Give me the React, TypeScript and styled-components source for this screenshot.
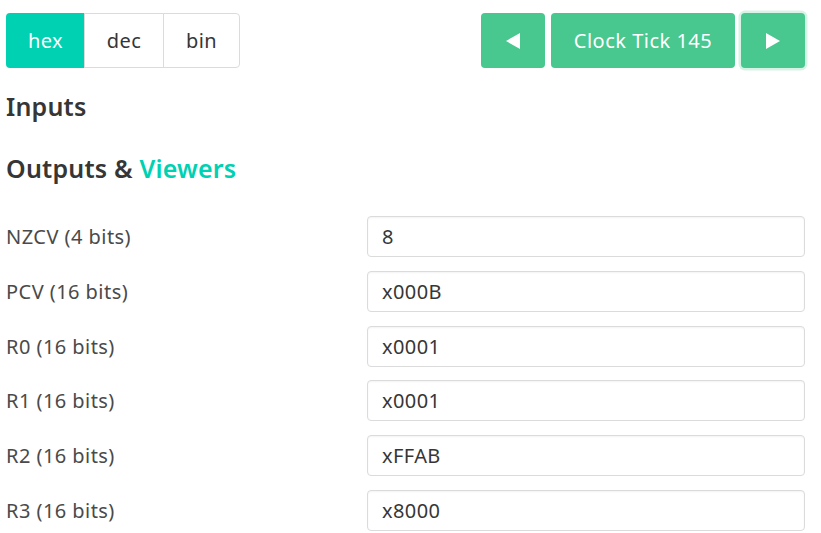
import React from "react";
import styled, { createGlobalStyle } from "styled-components";

const Global = createGlobalStyle`
  html, body { margin: 0; padding: 0; background: #fff; }
  body { font-family: "Noto Sans", "Open Sans", sans-serif; color: #4a4a4a; }
  * { box-sizing: border-box; }
`;

const Page = styled.div`
  padding: 13px 16px 0 6px;
  display: flex;
  flex-direction: column;
`;

const Toolbar = styled.div`
  display: flex;
  justify-content: space-between;
  align-items: center;
`;

const Segmented = styled.div`
  display: flex;
`;

const SegButton = styled.button<{ $active?: boolean; $first?: boolean; $last?: boolean }>`
  height: 55px;
  width: ${(p) => (p.$first ? 79 : p.$last ? 77 : 80)}px;
  font-family: inherit;
  font-size: 20px;
  letter-spacing: 0.4px;
  border: 1px solid ${(p) => (p.$active ? "transparent" : "#dbdbdb")};
  margin-left: ${(p) => (p.$first ? 0 : -1)}px;
  background: ${(p) => (p.$active ? "#00d1b2" : "#fff")};
  color: ${(p) => (p.$active ? "#fff" : "#363636")};
  border-radius: ${(p) => (p.$first ? "4px 0 0 4px" : p.$last ? "0 4px 4px 0" : "0")};
  padding: 0;
`;

const Controls = styled.div`
  display: flex;
  gap: 6px;
`;

const GreenButton = styled.button<{ $wide?: boolean; $focused?: boolean }>`
  height: 55px;
  width: ${(p) => (p.$wide ? 184 : 64)}px;
  background: #48c78e;
  color: #fff;
  border: none;
  border-radius: 4px;
  font-family: inherit;
  font-size: 20px;
  letter-spacing: 0.5px;
  display: flex;
  align-items: center;
  justify-content: center;
  padding: 0;
  box-shadow: ${(p) => (p.$focused ? "0 0 0 2.5px rgba(72, 199, 142, 0.22)" : "none")};
`;

const Heading = styled.h2<{ $top: number }>`
  margin: ${(p) => p.$top}px 0 0 0;
  font-size: 25px;
  font-weight: 600;
  letter-spacing: 0.2px;
  line-height: 30px;
  color: #363636;
`;

const Accent = styled.span`
  color: #00d1b2;
`;

const Rows = styled.div`
  margin-top: 33px;
  display: flex;
  flex-direction: column;
  gap: 13.8px;
`;

const Row = styled.div`
  display: grid;
  grid-template-columns: 361px 1fr;
  align-items: center;
`;

const Label = styled.label`
  font-size: 20px;
  letter-spacing: 0.45px;
  color: #4a4a4a;
`;

const ValueInput = styled.input`
  height: 41px;
  width: 100%;
  border: 1px solid #dbdbdb;
  border-radius: 4px;
  padding: 0 14px;
  font-family: inherit;
  font-size: 20px;
  letter-spacing: 0.4px;
  color: #363636;
  background: #fff;
  box-shadow: inset 0 1px 2px rgba(10, 10, 10, 0.05);
  outline: none;
`;

const Tri = ({ dir }: { dir: "left" | "right" }) => (
  <svg width="14" height="16" viewBox="0 0 14 16">
    {dir === "left" ? (
      <polygon points="14,0 14,16 0,8" fill="#fff" />
    ) : (
      <polygon points="0,0 0,16 14,8" fill="#fff" />
    )}
  </svg>
);

const rows = [
  ["NZCV (4 bits)", "8"],
  ["PCV (16 bits)", "x000B"],
  ["R0 (16 bits)", "x0001"],
  ["R1 (16 bits)", "x0001"],
  ["R2 (16 bits)", "xFFAB"],
  ["R3 (16 bits)", "x8000"],
];

export default function App() {
  return (
    <>
      <Global />
      <Page>
        <Toolbar>
          <Segmented>
            <SegButton $active $first>hex</SegButton>
            <SegButton>dec</SegButton>
            <SegButton $last>bin</SegButton>
          </Segmented>
          <Controls>
            <GreenButton><Tri dir="left" /></GreenButton>
            <GreenButton $wide>Clock Tick 145</GreenButton>
            <GreenButton $focused><Tri dir="right" /></GreenButton>
          </Controls>
        </Toolbar>
        <Heading $top={23}>Inputs</Heading>
        <Heading $top={32}>
          Outputs &amp; <Accent>Viewers</Accent>
        </Heading>
        <Rows>
          {rows.map(([l, v]) => (
            <Row key={l}>
              <Label>{l}</Label>
              <ValueInput readOnly value={v} />
            </Row>
          ))}
        </Rows>
      </Page>
    </>
  );
}
